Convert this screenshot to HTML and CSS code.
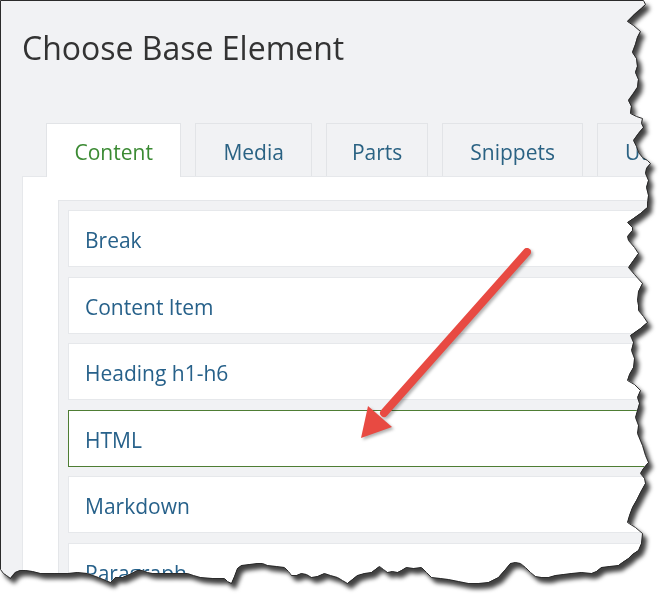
FILE: index.html
```html
<!DOCTYPE html>
<html>
<head>
<meta charset="utf-8">
<title>Choose Base Element</title>
<link rel="stylesheet" href="styles.css">
</head>
<body>
<div class="frame">
  <div class="shot">
    <h1 class="title">Choose Base Element</h1>
    <div class="tabs">
      <div class="tab active">Content</div>
      <div class="tab">Media</div>
      <div class="tab tab-narrow">Parts</div>
      <div class="tab">Snippets</div>
      <div class="tab">Utilities</div>
    </div>
    <div class="panel">
      <div class="list">
        <div class="item">Break</div>
        <div class="item">Content Item</div>
        <div class="item">Heading h1-h6</div>
        <div class="item selected">HTML</div>
        <div class="item">Markdown</div>
        <div class="item">Paragraph</div>
      </div>
    </div>
  </div>
  <svg class="overlay" width="671" height="608" viewBox="0 0 671 608">
    <polygon class="edge" transform="translate(0.5 0.5)" points="0,0 643,0 645,4 641,8 634,14 627,21 633,25 640,31 637,37 635,44 632,52 636,58 637,66 635,72 638,79 637,87 633,93 628,100 631,106 630,113 636,116 642,118 641,123 643,127 638,133 633,140 636,146 638,152 642,157 647,160 650,163 646,168 645,173 648,180 646,187 648,195 647,203 647,207 640,213 633,218 627,222 632,227 632,230 627,236 628,240 634,247 638,253 633,260 628,267 634,274 642,283 638,291 637,300 638,305 638,310 643,316 647,322 640,328 630,335 633,342 631,350 634,358 633,367 629,374 627,380 634,384 640,390 637,397 639,403 637,410 635,417 638,425 637,433 642,445 645,455 648,462 643,468 640,473 644,478 645,483 640,492 636,500 632,507 629,515 627,522 635,527 642,533 641,543 638,550 632,554 628,558 622,562 618,565 609,566 601,567 596,571 591,573 581,572 571,573 563,574 555,575 548,577 541,577 535,576 530,572 525,567 520,563 515,562 510,563 505,569 498,577 492,580 488,582 478,583 468,583 458,581 448,579 440,578 431,577 426,572 421,567 413,568 406,567 401,570 397,572 392,571 387,572 383,569 379,566 375,569 371,572 364,573 357,575 352,579 347,583 342,580 337,577 330,575 324,573 317,576 311,577 306,574 301,573 296,575 291,575 288,571 284,567 276,566 267,565 262,563 257,563 249,564 241,565 237,568 234,576 231,583 227,581 224,578 212,578 200,577 193,575 187,573 172,573 157,573 152,573 147,572 142,570 137,570 129,574 122,577 115,577 110,582 98,577 87,573 77,572 67,573 54,573 40,573 32,571 25,570 20,570 15,572 10,578 6,575 3,573 0,569"/>
    <g class="arrow">
      <line x1="527" y1="252" x2="384" y2="413" stroke="#e84a42" stroke-width="8" stroke-linecap="round"/>
      <polygon points="361,438 368,406 392,427" fill="#e84a42"/>
    </g>
  </svg>
</div>
</body>
</html>
```

FILE: styles.css
```css
html, body {
  margin: 0;
  padding: 0;
  background: #ffffff;
}

.frame {
  position: relative;
  width: 671px;
  height: 608px;
  filter: drop-shadow(4px 5px 2px rgba(0, 0, 0, 0.75));
}

.shot {
  width: 671px;
  height: 608px;
  box-sizing: border-box;
  overflow: hidden;
  background: #f1f2f4;
  padding: 26px 0 0 22px;
  font-family: "Open Sans", "Noto Sans", sans-serif;
  clip-path: polygon(0px 0px, 643px 0px, 645px 4px, 641px 8px, 634px 14px, 627px 21px, 633px 25px, 640px 31px, 637px 37px, 635px 44px, 632px 52px, 636px 58px, 637px 66px, 635px 72px, 638px 79px, 637px 87px, 633px 93px, 628px 100px, 631px 106px, 630px 113px, 636px 116px, 642px 118px, 641px 123px, 643px 127px, 638px 133px, 633px 140px, 636px 146px, 638px 152px, 642px 157px, 647px 160px, 650px 163px, 646px 168px, 645px 173px, 648px 180px, 646px 187px, 648px 195px, 647px 203px, 647px 207px, 640px 213px, 633px 218px, 627px 222px, 632px 227px, 632px 230px, 627px 236px, 628px 240px, 634px 247px, 638px 253px, 633px 260px, 628px 267px, 634px 274px, 642px 283px, 638px 291px, 637px 300px, 638px 305px, 638px 310px, 643px 316px, 647px 322px, 640px 328px, 630px 335px, 633px 342px, 631px 350px, 634px 358px, 633px 367px, 629px 374px, 627px 380px, 634px 384px, 640px 390px, 637px 397px, 639px 403px, 637px 410px, 635px 417px, 638px 425px, 637px 433px, 642px 445px, 645px 455px, 648px 462px, 643px 468px, 640px 473px, 644px 478px, 645px 483px, 640px 492px, 636px 500px, 632px 507px, 629px 515px, 627px 522px, 635px 527px, 642px 533px, 641px 543px, 638px 550px, 632px 554px, 628px 558px, 622px 562px, 618px 565px, 609px 566px, 601px 567px, 596px 571px, 591px 573px, 581px 572px, 571px 573px, 563px 574px, 555px 575px, 548px 577px, 541px 577px, 535px 576px, 530px 572px, 525px 567px, 520px 563px, 515px 562px, 510px 563px, 505px 569px, 498px 577px, 492px 580px, 488px 582px, 478px 583px, 468px 583px, 458px 581px, 448px 579px, 440px 578px, 431px 577px, 426px 572px, 421px 567px, 413px 568px, 406px 567px, 401px 570px, 397px 572px, 392px 571px, 387px 572px, 383px 569px, 379px 566px, 375px 569px, 371px 572px, 364px 573px, 357px 575px, 352px 579px, 347px 583px, 342px 580px, 337px 577px, 330px 575px, 324px 573px, 317px 576px, 311px 577px, 306px 574px, 301px 573px, 296px 575px, 291px 575px, 288px 571px, 284px 567px, 276px 566px, 267px 565px, 262px 563px, 257px 563px, 249px 564px, 241px 565px, 237px 568px, 234px 576px, 231px 583px, 227px 581px, 224px 578px, 212px 578px, 200px 577px, 193px 575px, 187px 573px, 172px 573px, 157px 573px, 152px 573px, 147px 572px, 142px 570px, 137px 570px, 129px 574px, 122px 577px, 115px 577px, 110px 582px, 98px 577px, 87px 573px, 77px 572px, 67px 573px, 54px 573px, 40px 573px, 32px 571px, 25px 570px, 20px 570px, 15px 572px, 10px 578px, 6px 575px, 3px 573px, 0px 569px);
}

.title {
  margin: 0;
  font-size: 32px;
  line-height: 44px;
  font-weight: 400;
  color: #333333;
  white-space: nowrap;
}

.tabs {
  display: flex;
  gap: 14px;
  margin: 53px 0 0 24px;
  position: relative;
  z-index: 1;
}

.tab {
  flex: none;
  box-sizing: border-box;
  height: 53px;
  padding: 5px 27px 0;
  line-height: 47px;
  font-size: 21px;
  color: #2a6283;
  background: #f1f2f4;
  border: 1px solid #e2e4e7;
  border-bottom: none;
  white-space: nowrap;
}

.tab.tab-narrow {
  padding: 5px 25px 0;
}

.tab.active {
  background: #ffffff;
  color: #3b8a33;
  height: 54px;
  margin-bottom: -1px;
  padding: 5px 27.5px 0;
}

.panel {
  width: 720px;
  height: 500px;
  box-sizing: border-box;
  background: #ffffff;
  border-top: 1px solid #e6e8eb;
  border-left: 1px solid #e6e8eb;
  padding: 23px 0 0 35px;
}

.list {
  background: #f1f2f4;
  border: 1px solid #e4e6e9;
  padding: 9px;
  display: flex;
  flex-direction: column;
  gap: 9.6px;
}

.item {
  box-sizing: border-box;
  height: 57px;
  padding: 4px 16px 0;
  line-height: 51px;
  font-size: 21px;
  color: #27618a;
  background: #ffffff;
  border: 1px solid #e6e8eb;
  white-space: nowrap;
}

.item.selected {
  border-color: #4e7d34;
}

.overlay {
  position: absolute;
  left: 0;
  top: 0;
  overflow: visible;
}

.edge {
  fill: none;
  stroke: #2b2b2b;
  stroke-width: 1;
}

.arrow {
  filter: drop-shadow(2px 2px 1.5px rgba(0, 0, 0, 0.3));
}
```
